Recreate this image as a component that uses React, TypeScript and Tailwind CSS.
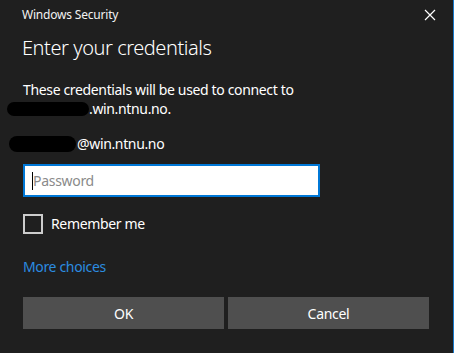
export default function App() {
  return (
    <div
      className="w-[454px] h-[353px] bg-[#1f1f1f] border-r border-[#1979ca] text-white flex flex-col overflow-hidden"
      style={{ fontFamily: '"Noto Sans", "Open Sans", sans-serif' }}
    >
      <div className="flex items-center justify-between pl-[22px] pr-[16px] h-[30px]">
        <span className="text-[12px] text-[#f2f2f2] tracking-[-0.2px]">Windows Security</span>
        <svg width="12" height="12" viewBox="0 0 12 12" className="mr-[1px]">
          <path d="M1 1L11 11M11 1L1 11" stroke="#ffffff" strokeWidth="1.2" />
        </svg>
      </div>

      <h1 className="pl-[22px] mt-[4px] text-[20px] leading-[28px] font-light tracking-[-0.45px]">Enter your credentials</h1>

      <div className="pl-[23px] mt-[18px] text-[14px] leading-[19px] tracking-[-0.35px]">
        <div>These credentials will be used to connect to</div>
        <div className="flex items-center -ml-[16px]">
          <span className="w-[82px] h-[14px] bg-black rounded-full" />
          <span>.win.ntnu.no.</span>
        </div>
        <div className="flex items-center -ml-[14px] mt-[16px]">
          <span className="w-[67px] h-[16px] bg-black rounded-full mr-[1px]" />
          <span>@win.ntnu.no</span>
        </div>
      </div>

      <div className="pl-[23px] mt-[11px]">
        <div className="w-[297px] h-[33px] bg-white border-2 border-[#0078d7] flex items-center pl-[7px]">
          <span className="w-px h-[18px] bg-black" />
          <span className="text-[14px] text-[#8a8a8a] tracking-[-0.3px]">Password</span>
        </div>
      </div>

      <div className="pl-[23px] mt-[16px] flex items-center gap-[8px]">
        <span className="w-[20px] h-[20px] border-2 border-[#cccccc]" />
        <span className="text-[14px] tracking-[-0.35px]">Remember me</span>
      </div>

      <div className="pl-[23px] mt-[22px] text-[14px] text-[#2b8ce0] tracking-[-0.35px]">More choices</div>

      <div className="pl-[23px] mt-[20px] flex gap-[4px]">
        <button className="w-[201px] h-[32px] bg-[#4f4f4f] text-[14px] text-white tracking-[-0.3px]">OK</button>
        <button className="w-[201px] h-[32px] bg-[#4f4f4f] text-[14px] text-white tracking-[-0.3px]">Cancel</button>
      </div>
    </div>
  );
}
